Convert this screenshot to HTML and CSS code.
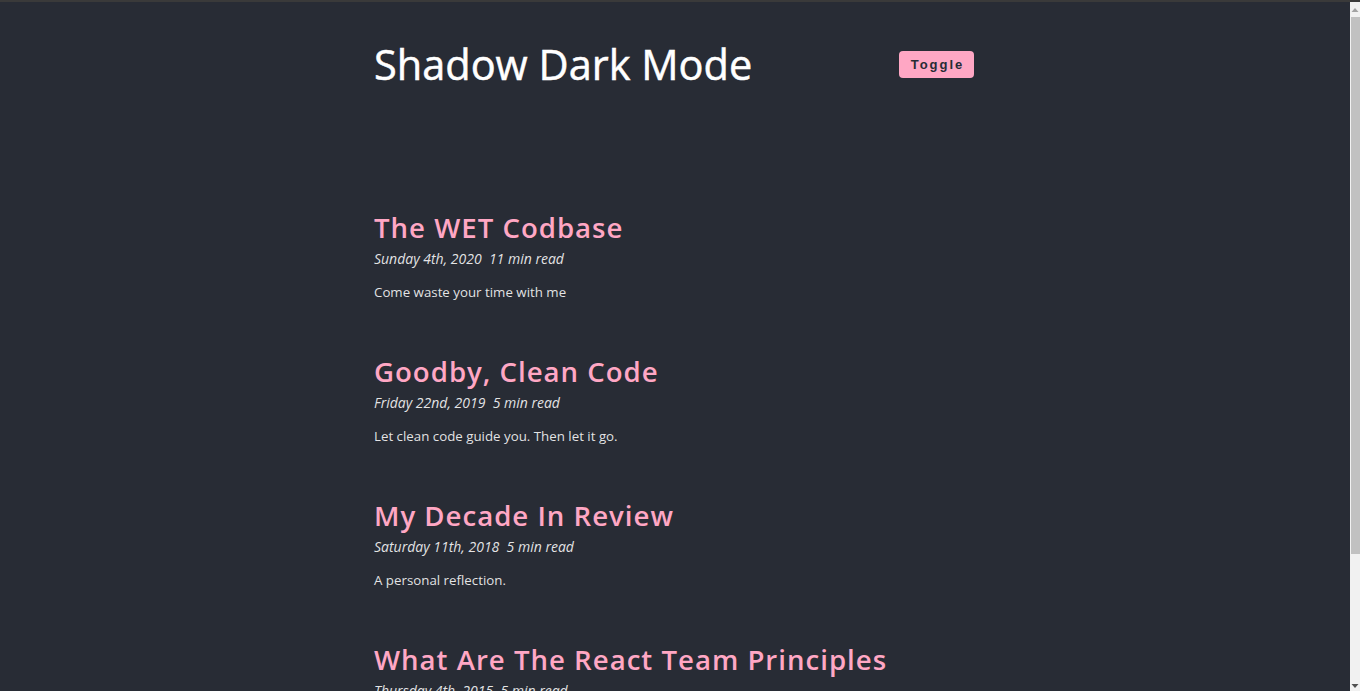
FILE: index.html
```html
<!DOCTYPE html>
<html lang="en">
<head>
<meta charset="utf-8">
<title>Shadow Dark Mode</title>
<link rel="stylesheet" href="styles.css">
</head>
<body>
<div class="topline"></div>
<div class="window">
  <div class="page">
    <div class="container">
      <header class="header">
        <h1 class="site-title">Shadow Dark Mode</h1>
        <button class="toggle">Toggle</button>
      </header>
      <main class="posts">
        <article class="post">
          <h2 class="post-title">The WET Codbase</h2>
          <p class="post-meta">Sunday 4th, 2020&nbsp; 11 min read</p>
          <p class="post-excerpt">Come waste your time with me</p>
        </article>
        <article class="post">
          <h2 class="post-title">Goodby, Clean Code</h2>
          <p class="post-meta">Friday 22nd, 2019&nbsp; 5 min read</p>
          <p class="post-excerpt">Let clean code guide you. Then let it go.</p>
        </article>
        <article class="post">
          <h2 class="post-title">My Decade In Review</h2>
          <p class="post-meta">Saturday 11th, 2018&nbsp; 5 min read</p>
          <p class="post-excerpt">A personal reflection.</p>
        </article>
        <article class="post">
          <h2 class="post-title">What Are The React Team Principles</h2>
          <p class="post-meta">Thursday 4th, 2015&nbsp; 5 min read</p>
          <p class="post-excerpt">Our guiding principles.</p>
        </article>
      </main>
    </div>
  </div>
  <div class="scrollbar" aria-hidden="true">
    <div class="sb-button">
      <svg width="10" height="6" viewBox="0 0 10 6"><path d="M5 1 L8.5 5 L1.5 5 Z" fill="#a3a3a3"/></svg>
    </div>
    <div class="sb-thumb"></div>
    <div class="sb-track"></div>
    <div class="sb-button sb-down">
      <svg width="10" height="6" viewBox="0 0 10 6"><path d="M1.5 1 L8.5 1 L5 5 Z" fill="#505050"/></svg>
    </div>
  </div>
</div>
</body>
</html>
```
FILE: styles.css
```css
html, body {
  margin: 0;
  padding: 0;
  height: 100%;
  overflow: hidden;
  background: #282c35;
}

body {
  display: flex;
  flex-direction: column;
  font-family: "Open Sans", "Noto Sans", sans-serif;
}

.topline {
  height: 2px;
  background: #3a3a3a;
  flex: none;
}

.window {
  flex: 1;
  display: flex;
  min-height: 0;
}

.page {
  flex: 1;
  overflow: hidden;
  background: #282c35;
}

.scrollbar {
  width: 10px;
  flex: none;
  display: flex;
  flex-direction: column;
  background: #f1f1f1;
}

.sb-button {
  height: 15px;
  flex: none;
  display: flex;
  align-items: center;
  justify-content: center;
}

.sb-down {
  height: 8px;
  align-items: flex-start;
  padding-top: 2px;
}

.sb-thumb {
  height: 537px;
  flex: none;
  margin-left: 1px;
  background: #c1c1c1;
}

.sb-track {
  flex: 1;
}

.container {
  width: 602px;
  margin: 0 auto;
  padding: 38px 0 120px;
}

.header {
  display: flex;
  align-items: center;
  justify-content: space-between;
  height: 48px;
}

.site-title {
  margin: 0;
  font-size: 41.5px;
  font-weight: 500;
  color: #ffffff;
  line-height: 48px;
  -webkit-text-stroke: 0.5px #ffffff;
}

.toggle {
  width: 75px;
  height: 27px;
  border: none;
  border-radius: 4px;
  background: #ffa7c4;
  color: #282c35;
  font-family: "Liberation Sans", Arial, sans-serif;
  font-weight: 700;
  font-size: 13px;
  letter-spacing: 2px;
  padding: 0 0 0 2px;
  margin-top: 0;
  margin-right: 2px;
}

.posts {
  margin-top: 119px;
  display: flex;
  flex-direction: column;
}

.post {
  height: 144px;
}

.post-title {
  margin: 0;
  font-size: 27.6px;
  font-weight: 600;
  letter-spacing: 1px;
  color: #ffa7c4;
  line-height: 40px;
}

.post-meta {
  margin: 0 0 0;
  padding-top: 1px;
  font-size: 14px;
  font-style: italic;
  color: rgba(255, 255, 255, 0.88);
  line-height: 22px;
}

.post-excerpt {
  margin: 11px 0 0;
  font-size: 13.3px;
  color: rgba(255, 255, 255, 0.88);
  line-height: 22px;
}
```
